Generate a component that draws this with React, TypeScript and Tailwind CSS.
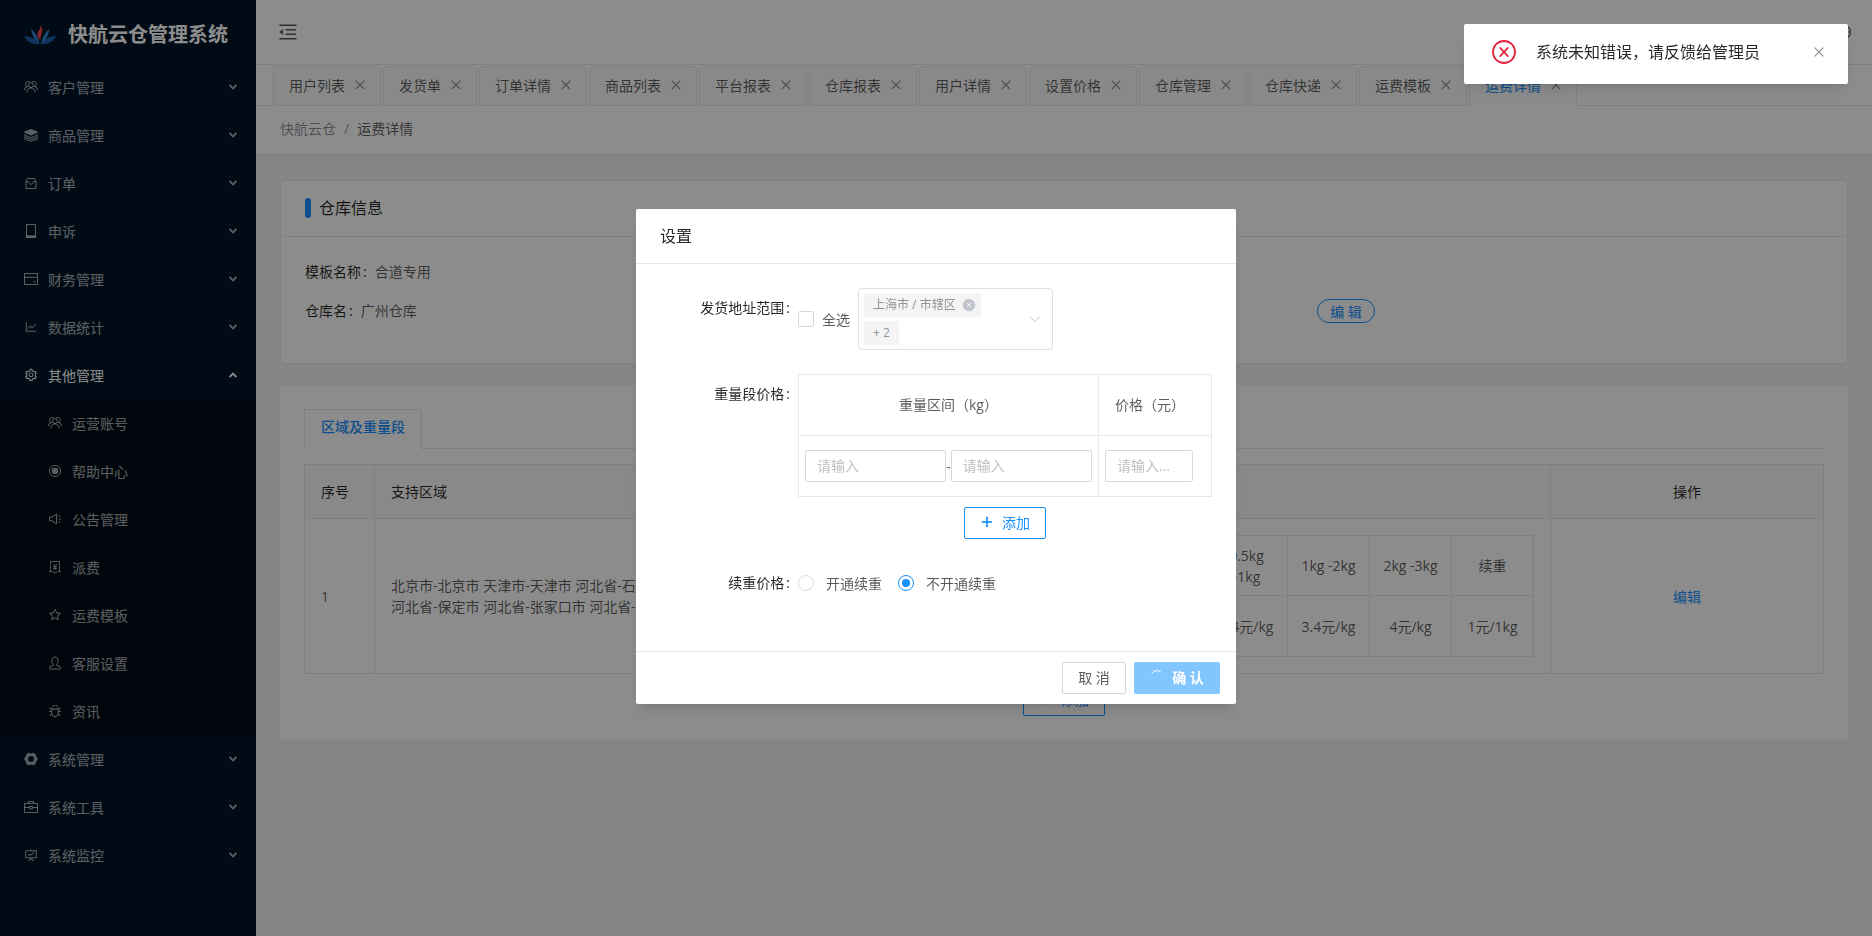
import React, { useState } from "react";
import {
    AiFillCloseCircle,
    AiOutlineBug,
    AiOutlineClose,
    AiOutlineDown,
    AiOutlineFundProjectionScreen,
    AiOutlineGlobal,
    AiOutlineLineChart,
    AiOutlineMenuFold,
    AiOutlinePlus,
    AiOutlineSetting,
    AiOutlineSound,
    AiOutlineStar,
} from "react-icons/ai";

type IconProps = { className?: string };

type MenuItem = {
    label: string;
    icon: React.ComponentType<IconProps>;
    children?: MenuItem[];
};

const lineIcon = {
    viewBox: "0 0 14 14",
    width: 14,
    height: 14,
    fill: "none",
    stroke: "currentColor",
};

const TeamIcon = () => (
    <svg {...lineIcon}>
        <path d="M4.2 6.8A2.6 2.6 0 0 1 3 1.9a2.4 2.4 0 0 1 3 .3M9.8 6.8A2.6 2.6 0 0 0 11 1.9a2.4 2.4 0 0 0-3 .3" />
        <circle cx="7" cy="5" r="2.4" />
        <path d="M2.8 12.5C2.8 9.6 4.6 8 7 8s4.2 1.6 4.2 4.5M.5 10.2c0-2 1-3.2 2.8-3.8M13.5 10.2c0-2-1-3.2-2.8-3.8" />
    </svg>
);

const GoodsIcon = () => (
    <svg {...lineIcon}>
        <path d="M7 1l6.6 2.6v1.2L7 7.6.4 4.8V3.6z" fill="currentColor" stroke="none" />
        <path d="M.6 6.2v1L7 9.6l6.4-2.4v-1M.6 8.2v1L7 11.4l6.4-2.2v-1M.6 10.2v.9L7 13.2l6.4-2.1v-.9" />
    </svg>
);

const OrderIcon = () => (
    <svg {...lineIcon}>
        <path d="M3.4 2.5h7.2l1.4 3v7H2v-7zM2 5.8h2.6c.3 1.6 1.1 2.4 2.4 2.4s2.1-.8 2.4-2.4H12" />
    </svg>
);

const MobileIcon = () => (
    <svg {...lineIcon}>
        <path d="M2.5.5h9v13h-9z" />
        <path d="M2.5 12.3h9" strokeWidth="2" />
    </svg>
);

const CardIcon = () => (
    <svg {...lineIcon}>
        <path d="M.5 1.5h13v11H.5zM.5 5.3h13M9 9.8h2.4" />
    </svg>
);

const TargetIcon = () => (
    <svg {...lineIcon}>
        <circle cx="7" cy="7" r="5.6" />
        <circle cx="7" cy="7" r="3.3" fill="currentColor" stroke="none" />
    </svg>
);

const FeeIcon = () => (
    <svg {...lineIcon} strokeWidth=".9">
        <path d="M2.5 1.5h9v9.2L7 13l-4.5-2.3zM1 11.5h2.2M10.8 11.5H13M4.8 3.8L7 6.4l2.2-2.6M7 6.4v4M5 6.8h4M5 8.4h4" />
    </svg>
);

const ServiceIcon = () => (
    <svg {...lineIcon}>
        <path d="M5.2 8.4C4.3 7.6 3.9 6.4 3.9 4.5 3.9 2.3 5.1 1 7 1s3.1 1.3 3.1 3.5c0 1.9-.4 3.1-1.3 3.9v1.1l3.3 1.2c.6.5.6 1.9 0 2.3H1.9c-.6-.4-.6-1.8 0-2.3l3.3-1.2z" />
    </svg>
);

const GearIcon = () => (
    <svg {...lineIcon} fill="currentColor" stroke="none">
        <path
            fillRule="evenodd"
            d="M4.6.8 7 1.4 9.4.8l2.2 1.4.6 2.3L14 7l-1.8 2.5-.6 2.3-2.2 1.4-2.4-.6-2.4.6-2.2-1.4-.6-2.3L0 7l1.8-2.5.6-2.3zM7 4a3 3 0 1 0 0 6 3 3 0 0 0 0-6z"
        />
    </svg>
);

const ToolIcon = () => (
    <svg {...lineIcon}>
        <path d="M.5 3.5h13v9H.5zM4.5 3.5v-2h5v2M.5 7.5h4.8M8.7 7.5h4.8M5.3 6.5h3.4v2.3H5.3z" />
    </svg>
);

const Arrow = ({ className }: IconProps) => (
    <svg viewBox="0 0 8 6" width="8" height="6" fill="none" stroke="currentColor" strokeWidth="1.8" className={className}>
        <path d="M.6 1 4 4.4 7.4 1" />
    </svg>
);

const Logo = () => (
    <svg viewBox="0 0 32 20" width="32" height="20">
        <path d="M0 11c6 0 12 3 16 8C9 20 3 17 0 11zM32 11c-6 0-12 3-16 8 7 1 13-2 16-8z" fill="#1d5fae" />
        <path d="M7 4c4 3 7 8 8.3 14C10.5 15 8 10 7 4zM25.5 4c-4 3-7 8-8.3 14 4.8-3 7.3-8 8.3-14z" fill="#2f8fd8" />
        <path d="M16.5 0c3.5 4 1.5 8 .5 10.5-.4 1.500-.5 3-.5 4.500-3-2-4-5-2.500-8 1.200-2.500 3-4 2.500-7z" fill="#e8434a" />
    </svg>
);

const menu: MenuItem[] = [
    { label: "客户管理", icon: TeamIcon },
    { label: "商品管理", icon: GoodsIcon },
    { label: "订单", icon: OrderIcon },
    { label: "申诉", icon: MobileIcon },
    { label: "财务管理", icon: CardIcon },
    { label: "数据统计", icon: AiOutlineLineChart },
    {
        label: "其他管理",
        icon: AiOutlineSetting,
        children: [
            { label: "运营账号", icon: TeamIcon },
            { label: "帮助中心", icon: TargetIcon },
            { label: "公告管理", icon: AiOutlineSound },
            { label: "派费", icon: FeeIcon },
            { label: "运费模板", icon: AiOutlineStar },
            { label: "客服设置", icon: ServiceIcon },
            { label: "资讯", icon: AiOutlineBug },
        ],
    },
    { label: "系统管理", icon: GearIcon },
    { label: "系统工具", icon: ToolIcon },
    { label: "系统监控", icon: AiOutlineFundProjectionScreen },
];

const tabs = [
    "用户列表",
    "发货单",
    "订单详情",
    "商品列表",
    "平台报表",
    "仓库报表",
    "用户详情",
    "设置价格",
    "仓库管理",
    "仓库快递",
    "运费模板",
    "运费详情",
];

const weights = [
    { range: "0kg -0.5kg", price: "2元/kg" },
    { range: "0.5kg -1kg", price: "2.4元/kg" },
    { range: "1kg -2kg", price: "3.4元/kg" },
    { range: "2kg -3kg", price: "4元/kg" },
    { range: "续重", price: "1元/1kg" },
];

const Sidebar = () => (
    <aside className="w-64 shrink-0 bg-[#001529] text-white/65">
        <div className="flex h-16 items-center gap-3 pl-6 pt-[6px]">
            <Logo />
            <h1 className="text-xl font-bold text-white">快航云仓管理系统</h1>
        </div>
        <nav>
            {menu.map(({ label, icon: Icon, children }) => (
                <div key={label}>
                    <button
                        type="button"
                        className={`flex h-12 w-full items-center gap-[10px] pb-[2px] pl-6 pr-[19px] text-left ${children ? "text-white" : ""}`}
                    >
                        <Icon />
                        <span className="flex-1">{label}</span>
                        <Arrow className={children ? "rotate-180" : ""} />
                    </button>
                    {children && (
                        <div className="bg-[#000c17]">
                            {children.map(({ label, icon: SubIcon }) => (
                                <a key={label} href="#" className="flex h-12 items-center gap-[10px] pb-[2px] pl-12">
                                    <SubIcon />
                                    {label}
                                </a>
                            ))}
                        </div>
                    )}
                </div>
            ))}
        </nav>
    </aside>
);

const PageTabs = () => (
    <div className="flex h-[41px] items-end gap-[2px] border-b border-[#e8e8e8] pl-[17px]">
        {tabs.map((tab, i) => {
            const active = i === tabs.length - 1;
            return (
                <div
                    key={tab}
                    className={`-mb-px flex h-10 items-center gap-2 rounded-t border border-[#e8e8e8] pb-[2px] pl-[15px] pr-[13px] ${
                        active ? "border-b-white bg-white text-[#1890ff]" : "bg-[#fafafa]"
                    }`}
                >
                    <a href="#" className="whitespace-nowrap">{tab}</a>
                    <button type="button" aria-label={`关闭${tab}`} className="text-sm text-black/45">
                        <AiOutlineClose />
                    </button>
                </div>
            );
        })}
    </div>
);

const WarehouseCard = () => (
    <section className="border border-[#e8e8e8] bg-white">
        <div className="flex h-14 items-center gap-2 border-b border-[#e8e8e8] px-6 pb-[2px]">
            <span className="h-5 w-[6px] rounded-[3px] bg-[#1890ff]" />
            <h2 className="text-base text-black/85">仓库信息</h2>
        </div>
        <div className="grid grid-cols-3 gap-y-[15px] px-6 pb-10 pt-[23px]">
            <p className="col-span-3 leading-6">
                <span className="text-black/85">模板名称</span>
                <span className="ml-[2px] mr-2 text-black/85">:</span>合道专用
            </p>
            <p className="col-span-2 leading-6">
                <span className="text-black/85">仓库名</span>
                <span className="ml-[2px] mr-2 text-black/85">:</span>广州仓库
            </p>
            <div>
                <button type="button" className="h-6 w-[58px] rounded-full border border-[#1890ff] text-[#1890ff]">
                    编 辑
                </button>
            </div>
        </div>
    </section>
);

const AddButton = () => (
    <button
        type="button"
        className="flex h-8 w-[82px] items-center justify-center gap-2 rounded-[2px] border border-[#1890ff] bg-white pb-[2px] text-[#1890ff]"
    >
        <AiOutlinePlus strokeWidth={50} />
        添加
    </button>
);

const RegionCard = () => (
    <section className="flex flex-col bg-white p-6">
        <div className="flex border-b border-[#e8e8e8]">
            <button
                type="button"
                className="-mb-px h-10 border border-b-0 border-[#e8e8e8] bg-white px-4 pb-[6px] font-medium text-[#1890ff]"
            >
                区域及重量段
            </button>
        </div>
        <table className="mt-[15px] w-full table-fixed border-collapse border border-[#e8e8e8]">
            <thead className="bg-[#fafafa] text-left text-black/85">
                <tr className="h-[54px]">
                    <th className="w-[70px] border border-[#e8e8e8] px-4 font-normal">序号</th>
                    <th className="border border-[#e8e8e8] px-4 font-normal">支持区域</th>
                    <th className="w-[444px] border border-[#e8e8e8] px-4 font-normal">重量段价格</th>
                    <th className="w-[273px] border border-[#e8e8e8] px-4 text-center font-normal">操作</th>
                </tr>
            </thead>
            <tbody>
                <tr>
                    <td className="border border-[#e8e8e8] p-4">1</td>
                    <td className="border border-[#e8e8e8] p-4">
                        <p>北京市-北京市 天津市-天津市 河北省-石家庄市</p>
                        <p>河北省-保定市 河北省-张家口市 河北省-承德市</p>
                    </td>
                    <td className="border border-[#e8e8e8] p-4">
                        <table className="w-full table-fixed border-collapse text-center">
                            <tbody>
                                <tr className="h-[60px]">
                                    {weights.map(({ range }) => (
                                        <td key={range} className="border border-[#e8e8e8] px-3">{range}</td>
                                    ))}
                                </tr>
                                <tr className="h-[61px]">
                                    {weights.map(({ range, price }) => (
                                        <td key={range} className="border border-[#e8e8e8]">{price}</td>
                                    ))}
                                </tr>
                            </tbody>
                        </table>
                    </td>
                    <td className="border border-[#e8e8e8] text-center">
                        <a href="#" className="text-[#1890ff]">编辑</a>
                    </td>
                </tr>
            </tbody>
        </table>
        <div className="mt-[10px] flex justify-center">
            <AddButton />
        </div>
    </section>
);

const inputClass =
    "h-8 min-w-0 rounded-[2px] border border-[#d9d9d9] px-[11px] pb-[2px] text-ellipsis placeholder:text-[#bfbfbf] focus:border-[#1890ff] focus:outline-none";

const Tag = ({ children }: { children: React.ReactNode }) => (
    <span className="flex h-6 items-center gap-[6px] rounded-[2px] bg-[#f4f4f5] px-[9px] text-xs text-[#909399]">{children}</span>
);

const FormRow = ({ label, children }: { label: string; children: React.ReactNode }) => (
    <div className="mb-6 flex">
        <div className="flex w-1/4 shrink-0 justify-end gap-[2px] pr-2 leading-10 text-black/85">
            <span>{label}</span>
            <span>:</span>
        </div>
        <div className="flex-1">{children}</div>
    </div>
);

const SettingModal = () => {
    const [all, setAll] = useState(false);
    const [renewal, setRenewal] = useState("off");

    const radios = [
        { value: "on", label: "开通续重" },
        { value: "off", label: "不开通续重" },
    ];

    return (
        <div className="fixed inset-0 flex items-start justify-center bg-black/45 pt-[209px]">
            <div role="dialog" aria-labelledby="setting-title" className="w-[600px] rounded-[2px] bg-white shadow-lg">
                <header className="border-b border-[#e8e8e8] px-6 py-4">
                    <h2 id="setting-title" className="text-base leading-[22px] text-black/85">设置</h2>
                </header>
                <form className="px-6 pb-6 pt-6">
                    <FormRow label="发货地址范围">
                        <div className="flex items-center gap-2">
                            <label className="flex items-center gap-2">
                                <input
                                    type="checkbox"
                                    checked={all}
                                    onChange={(e) => setAll(e.target.checked)}
                                    className="h-4 w-4 appearance-none rounded-[2px] border border-[#d9d9d9] bg-white checked:bg-[#1890ff]"
                                />
                                全选
                            </label>
                            <div className="flex w-[195px] items-center justify-between rounded border border-[#dcdfe6] py-1 pl-[5px] pr-[10px]">
                                <div className="flex flex-col items-start gap-1">
                                    <Tag>
                                        上海市 / 市辖区
                                        <button type="button" aria-label="移除" className="-mr-1 text-sm text-[#c0c4cc]">
                                            <AiFillCloseCircle />
                                        </button>
                                    </Tag>
                                    <Tag>+ 2</Tag>
                                </div>
                                <button type="button" aria-label="展开" className="text-[#c0c4cc]">
                                    <svg viewBox="0 0 14 14" width="14" height="14" fill="none" stroke="currentColor">
                                        <path d="M2 4.500l5 5 5-5" />
                                    </svg>
                                </button>
                            </div>
                        </div>
                    </FormRow>
                    <FormRow label="重量段价格">
                        <table className="w-full table-fixed border-collapse">
                            <thead>
                                <tr className="h-[61px]">
                                    <th className="w-[300px] border border-[#e8e8e8] pb-[2px] font-normal">重量区间（kg）</th>
                                    <th className="border border-[#e8e8e8] px-4 pb-[2px] text-left font-normal">价格（元）</th>
                                </tr>
                            </thead>
                            <tbody>
                                <tr className="h-[61px]">
                                    <td className="border border-[#e8e8e8] px-[6px]">
                                        <div className="flex items-center">
                                            <input aria-label="起始重量" placeholder="请输入" className={`flex-1 ${inputClass}`} />
                                            -
                                            <input aria-label="结束重量" placeholder="请输入" className={`flex-1 ${inputClass}`} />
                                        </div>
                                    </td>
                                    <td className="border border-[#e8e8e8] px-[6px]">
                                        <input aria-label="价格" placeholder="请输入价格" className={`w-[88px] ${inputClass}`} />
                                    </td>
                                </tr>
                            </tbody>
                        </table>
                        <div className="mt-[10px] flex justify-center">
                            <AddButton />
                        </div>
                    </FormRow>
                    <FormRow label="续重价格">
                        <div className="flex h-10 items-center gap-4">
                            {radios.map(({ value, label }) => (
                                <label key={value} className="flex items-center gap-3">
                                    <input
                                        type="radio"
                                        name="renewal"
                                        value={value}
                                        checked={renewal === value}
                                        onChange={() => setRenewal(value)}
                                        className="h-4 w-4 appearance-none rounded-full border border-[#d9d9d9] bg-white bg-clip-content p-[3px] checked:border-[#1890ff] checked:bg-[#1890ff]"
                                    />
                                    {label}
                                </label>
                            ))}
                        </div>
                    </FormRow>
                </form>
                <footer className="flex justify-end gap-2 border-t border-[#e8e8e8] px-4 py-[10px]">
                    <button type="button" className="h-8 w-16 rounded-[2px] border border-[#d9d9d9] pb-[2px]">取 消</button>
                    <button
                        type="button"
                        className="flex h-8 w-[86px] items-center justify-center gap-2 rounded-[2px] bg-[#82c6ff] pb-[2px] font-bold text-white"
                    >
                        <svg viewBox="0 0 14 14" width="14" height="14" fill="none" stroke="currentColor" strokeWidth="1">
                            <path d="M1.5 3.5A6.3 6.3 0 0 1 11 2.2" />
                        </svg>
                        确 认
                    </button>
                </footer>
            </div>
        </div>
    );
};

const Notification = () => (
    <div role="alert" className="fixed right-6 top-6 flex h-[60px] w-96 items-center rounded-[2px] bg-white pb-1 pl-7 pr-[22px] shadow-lg">
        <svg viewBox="0 0 24 24" width="24" height="24" fill="none" stroke="#e8243c" strokeWidth="1.8">
            <circle cx="12" cy="12" r="11" />
            <path d="M7.8 7.3l8.4 9.4M16.2 7.3l-8.4 9.4" />
        </svg>
        <p className="ml-5 flex-1 text-base text-black/85">系统未知错误，请反馈给管理员</p>
        <button type="button" aria-label="关闭" className="text-sm text-black/45">
            <AiOutlineClose />
        </button>
    </div>
);

const App = () => {
    return (
        <div className="flex min-h-screen bg-[#f0f2f5] font-['Open_Sans','Noto_Sans_CJK_SC',sans-serif] text-sm leading-[21px] text-black/65">
            <Sidebar />
            <div className="flex min-w-0 flex-1 flex-col">
                <header className="flex h-[65px] items-center justify-between border-b border-[#e8e8e8] bg-white pl-[21px] pr-5">
                    <button type="button" aria-label="收起菜单" className="text-[22px]">
                        <AiOutlineMenuFold />
                    </button>
                    <button type="button" aria-label="语言" className="text-base">
                        <AiOutlineGlobal />
                    </button>
                </header>
                <div className="bg-white">
                    <PageTabs />
                    <div className="flex h-[49px] items-center gap-2 border-b border-[#e8e8e8] px-6 pb-1">
                        <a href="#" className="text-black/45">快航云仓</a>
                        <span className="text-black/45">/</span>
                        <span>运费详情</span>
                    </div>
                </div>
                <main className="flex flex-col gap-[21px] p-6 pt-[25px]">
                    <WarehouseCard />
                    <RegionCard />
                </main>
            </div>
            <SettingModal />
            <Notification />
        </div>
    );
};

export default App;
